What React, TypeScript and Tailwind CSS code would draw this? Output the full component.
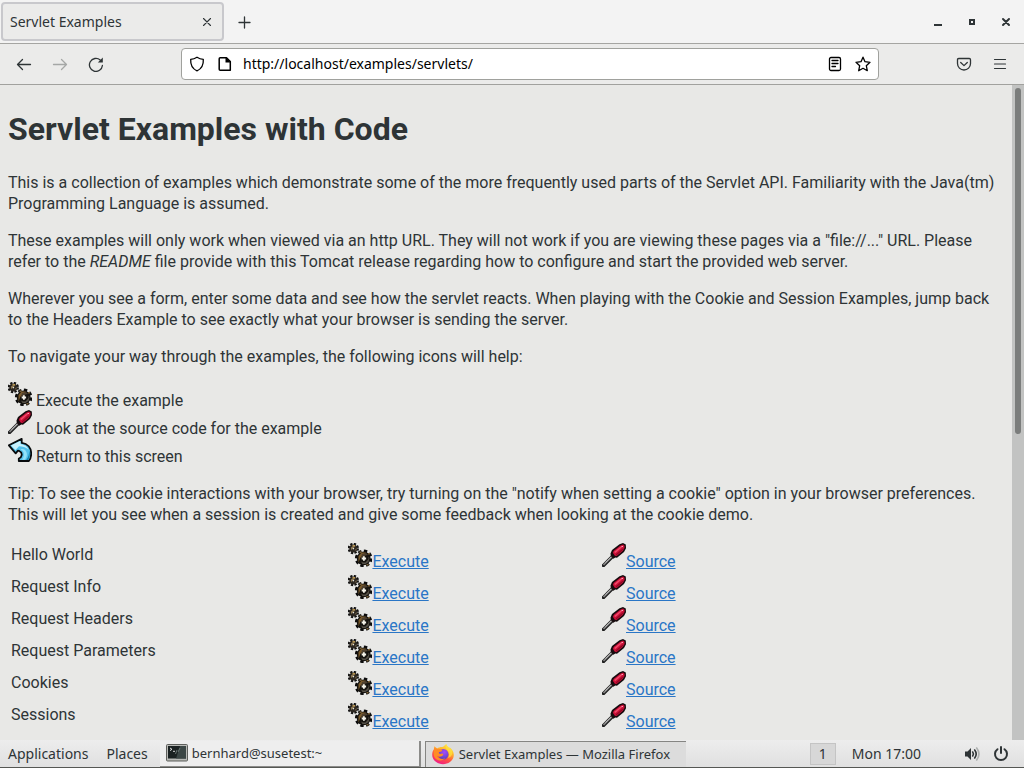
import type { ReactNode } from 'react';

const examples = [
  'Hello World',
  'Request Info',
  'Request Headers',
  'Request Parameters',
  'Cookies',
  'Sessions',
];

function GearsIcon() {
  return (
    <svg viewBox="0 0 24 24" className="inline-block size-6 align-baseline" aria-hidden="true">
      <circle cx="5.3" cy="5.5" r="4.4" fill="none" stroke="#111" strokeWidth="2.6" strokeDasharray="2.1 1.35" />
      <circle cx="5.3" cy="5.5" r="4" fill="#2b2620" />
      <path d="M3 4.500 5 3h2.500L5 5.500 3 7zM6.500 8l2-1.500V5z" fill="#8d7955" />
      <path d="M4.500 2h2.600v1.200H4.500z" fill="#b5924b" />
      <path d="M4.800 5h1.300v1.300H4.800z" fill="#e8e6dc" />
      <circle cx="15.700" cy="15.400" r="7.100" fill="none" stroke="#0c0c0c" strokeWidth="3.400" strokeDasharray="3.200 2.370" />
      <circle cx="15.700" cy="15.400" r="6.900" fill="#15130f" />
      <path d="M10.500 13 13.500 9.500H18l-5.500 5-2 5v-4z" fill="#7a5a2b" />
      <path d="m14 11 4-1 2 2-2.500.5-2 1.500-2.500 1z" fill="#4e4130" />
      <path d="m13 18.500 2 1h2.500l3-3.500v-2.500l1 1.500-1 4-3 2h-3z" fill="#565147" />
      <path d="M11.500 8.500h2v1.500h-2zM20 10h2v1.500h-2zM18.500 21h2v1.500h-2z" fill="#7d6339" />
      <path d="M15 13.300h1.800v1.300h1.300v1.800h-1.300v1.300H15v-1.300h-1.300v-1.800H15z" fill="#f4f2e8" />
    </svg>
  );
}

function ScrewdriverIcon() {
  return (
    <svg viewBox="0 0 24 24" className="inline-block size-6 align-baseline" aria-hidden="true">
      <path d="M1.500 22.500 11 13" stroke="#1c1c1c" strokeWidth="3.400" strokeLinecap="square" />
      <path d="M1.500 22 11 12.500" stroke="#858585" strokeWidth="1.700" />
      <path d="M3.400 19.700 9.500 13.700" stroke="#c9c9c9" strokeWidth=".8" />
      <path d="M8.500 10.500 10 7 17.500 1.300 21 .1 23.800 1.500 24 5.200 22 9 15 14.800l-1.700-.3-2 1.200-2.500-2.600z" fill="#170b0e" />
      <path d="M10.800 9.800 11.800 7.700 18.200 2.700 21 1.600 22.500 2.700 22.500 5 20.700 8 14.700 13 12.800 12.700z" fill="#cc1038" />
      <path d="m12 9 6.600-5.300 1.600.4-6.700 6z" fill="#f04a6a" />
      <path d="m14.200 12.600 5.900-4.900 1.900-3-3 2.200-5 4.300z" fill="#8b0824" />
      <path d="M19.500 2.900h1.400v1h-1.400z" fill="#ffb5c4" />
    </svg>
  );
}

function ReturnIcon() {
  return (
    <svg viewBox="0 0 24 24" className="inline-block size-6 align-baseline" aria-hidden="true">
      <path
        d="M.9 7.300 13.700.9v4c6 .7 9.500 5 9.500 10.800 0 3-.8 5.500-2.300 7.300H10.800v-2.500c3.200-1 4.200-5.700.8-7.300l-1.700-.5-2.200 2.600z"
        fill="#53c2ec"
        stroke="#080b0d"
        strokeWidth="1.800"
        strokeLinejoin="round"
      />
      <path d="M3 7.600 12.500 2.800v3.300c4 .5 6.700 2.500 8 5.500-2.800-2.700-6-3.300-9.500-3.300L7.500 12z" fill="#c7f1fc" />
      <path d="M12.500 11.500c4.300 1.600 4.500 6.500 1.500 10.300h3c2.700-3.700 2.300-7.300.3-9.500-1.300-1.200-3-1.600-4.800-.8z" fill="#91e2fa" />
      <path d="M21 12.500c1.300 3.200 1 6.500-.8 9.500h-2c2.400-2.800 3.100-6 2.800-9.500z" fill="#1683b0" />
    </svg>
  );
}

function TerminalIcon() {
  return (
    <svg viewBox="0 0 22 18" className="h-[18px] w-[22px] shrink-0" aria-hidden="true">
      <rect x=".5" y=".5" width="21" height="16.500" rx="1" fill="#b9bab7" stroke="#5d5f5c" />
      <rect x="2" y="2" width="18" height="12.500" fill="#1b2222" />
      <path d="M10 14.500 14 2h6v12.500z" fill="#3c4746" />
      <path d="m4 4 2 1.300-2 1.300M7 7.300h2" fill="none" stroke="#eee" strokeWidth=".9" />
      <path d="m11 6-1.500 4M14 4l-2 4" stroke="#677371" />
      <path d="M1 16h20v1H1z" fill="#888a85" />
    </svg>
  );
}

function FirefoxIcon() {
  return (
    <svg viewBox="0 0 24 22" className="h-[22px] w-6 shrink-0" aria-hidden="true">
      <defs>
        <linearGradient id="flame" x1=".8" y1="0" x2=".3" y2="1">
          <stop offset="0" stopColor="#fff04f" />
          <stop offset=".35" stopColor="#ffb52c" />
          <stop offset=".65" stopColor="#ff543f" />
          <stop offset="1" stopColor="#ef188c" />
        </linearGradient>
        <radialGradient id="globe" cx=".6" cy=".3" r=".8">
          <stop offset="0" stopColor="#a64bfb" />
          <stop offset="1" stopColor="#4a42b8" />
        </radialGradient>
      </defs>
      <path
        d="M15.200 1c.5 2 1.500 2.800 3.200 4.400l.2-1.200c2.800 2.500 4.400 5 4.200 8-.3 5.200-5.100 9-10.800 9C6 21.200 1.200 17 1.200 11.800c0-2.300.8-4.300 1.700-5.500l.4-3 2.900 2.300c1.300-1 2.700-1.500 4.800-1.500C12.500 4.100 13.500 2 15.200 1z"
        fill="url(#flame)"
      />
      <circle cx="12.300" cy="11.300" r="5.200" fill="url(#globe)" />
      <path d="M3.300 5.500c1.500-.3 3 0 4 .7 1.300-.5 2.800-.2 4 .8l-.9 1.500-2.700.7c0 1 .6 1.600 1.600 1.800l1.800-.4c1 .2 1.400.8 1 1.500-1.400 2-4 2.200-6.100.7 1.500 3.200 5.500 4.100 8.400 2.300-3.500 4-10 2.700-11.500-2.100-.5-2.700 0-5 .4-7.500z" fill="#ff8c25" />
      <path d="M15.200 1c-1 3 0 5 1.500 6.600 2 2 1.900 5.200.3 7.300 3-.8 4.700-3.500 4.300-6.500-.5-3.400-5-3.700-6.100-7.400z" fill="#ffe13d" opacity=".75" />
    </svg>
  );
}

function ChromeIcon({ children, className = 'size-4' }: { children: ReactNode; className?: string }) {
  return (
    <svg
      viewBox="0 0 16 16"
      className={className}
      fill="none"
      stroke="currentColor"
      strokeWidth="1.3"
      strokeLinecap="round"
      strokeLinejoin="round"
      aria-hidden="true"
    >
      {children}
    </svg>
  );
}

function TabStrip() {
  return (
    <header className="flex h-11 shrink-0 items-center border-b border-[#a5a5a2] bg-[#f3f3f3] text-[#2e3436]">
      <div className="ml-px flex h-[39px] w-[223px] items-center justify-between rounded border-2 border-[#c8c8cc] bg-[#ebebea] pr-[7px] pl-[7px]">
        <span className="text-sm">Servlet Examples</span>
        <button aria-label="Close tab" className="flex size-4 items-center justify-center">
          <ChromeIcon><path d="m4.500 4.500 7 7m0-7-7 7" strokeWidth="1.100" /></ChromeIcon>
        </button>
      </div>
      <button aria-label="New tab" className="ml-3 flex size-4 items-center justify-center">
        <ChromeIcon><path d="M8.500 3v11M3 8.500h11" /></ChromeIcon>
      </button>
      <div className="mr-2.5 ml-auto flex items-center gap-[18px]">
        <button aria-label="Minimize" className="size-4">
          <ChromeIcon><path d="M4 10h8v2H4z" fill="currentColor" stroke="none" /></ChromeIcon>
        </button>
        <button aria-label="Maximize" className="size-4">
          <ChromeIcon><path d="M6 6h4v4H6z" strokeWidth="2" strokeLinejoin="miter" /></ChromeIcon>
        </button>
        <button aria-label="Close window" className="size-4">
          <ChromeIcon><path d="m5 5 6 6m0-6-6 6" strokeWidth="2" /></ChromeIcon>
        </button>
      </div>
    </header>
  );
}

function NavBar() {
  return (
    <nav className="flex h-[41px] shrink-0 items-center border-b border-[#a1a19e] bg-[#ebebea] text-[#2e3436]">
      <div className="flex w-[181px] shrink-0 items-center gap-5 pl-4">
        <button aria-label="Back" className="size-4">
          <ChromeIcon><path d="M14.500 8.500h-13m5-5-5 5 5 5" /></ChromeIcon>
        </button>
        <button aria-label="Forward" className="size-4 text-[#a5a7a6]">
          <ChromeIcon><path d="M1.500 8.500h13m-5-5 5 5-5 5" /></ChromeIcon>
        </button>
        <button aria-label="Reload" className="size-4">
          <ChromeIcon>
            <path d="M14.400 9.500A6.500 6.500 0 1 1 12.200 4" />
            <path d="M14.800 1.500v5h-5z" fill="currentColor" stroke="none" />
          </ChromeIcon>
        </button>
      </div>
      <div className="flex h-8 flex-1 items-center rounded border border-[#a0a19d] bg-white px-[7px] text-black">
        <ChromeIcon>
          <path d="M8 1.200c2 1.300 4 2 6.300 2.200.3 5-1.700 9.500-6.300 11.400C3.400 12.900 1.400 8.400 1.700 3.400 4 3.200 6 2.500 8 1.200z" />
        </ChromeIcon>
        <ChromeIcon className="ml-3 size-4">
          <path d="M3.200 1.700h6.300l3.800 3.800v8.800H3.200q-1 0-1-1V2.700q0-1 1-1z" strokeWidth="1.500" />
          <path d="M8.500 1v5.500H14z" fill="currentColor" stroke="none" />
        </ChromeIcon>
        <input
          aria-label="Address"
          defaultValue="http://localhost/examples/servlets/"
          className="ml-2.5 min-w-0 flex-1 bg-transparent text-sm outline-none"
        />
        <button aria-label="Toggle reader view" className="size-4">
          <ChromeIcon>
            <rect x="2.500" y="1.500" width="11" height="13" rx="1.500" />
            <path d="M5 4.500h6M5 7.500h6M5 10.500h3.500" />
          </ChromeIcon>
        </button>
        <button aria-label="Bookmark this page" className="ml-3 size-4">
          <ChromeIcon>
            <path d="m8 1.200 2 4.500 5 .6-3.700 3.400 1 5L8 12.300l-4.300 2.400 1-5L1 6.300l5-.6z" />
          </ChromeIcon>
        </button>
      </div>
      <div className="flex w-[145px] shrink-0 items-center justify-end gap-5 pr-4">
        <button aria-label="Save to Pocket" className="size-4">
          <ChromeIcon>
            <path d="M2.700 2.500h10.600q1.200 0 1.200 1.200v3.800a6.500 6.500 0 0 1-13 0V3.700q0-1.200 1.200-1.200z" />
            <path d="M4.700 6.500 8 9.600l3.300-3.100" />
          </ChromeIcon>
        </button>
        <button aria-label="Open menu" className="size-4">
          <ChromeIcon><path d="M2.500 3.500h11m-11 4.500h11m-11 4.500h11" strokeWidth="1.200" /></ChromeIcon>
        </button>
      </div>
    </nav>
  );
}

function ServletPage() {
  return (
    <main className="min-w-0 flex-1 overflow-hidden px-2 pt-[23px] font-['Roboto',sans-serif] text-base leading-[21px] text-[#2e3436]">
      <h1 className="mb-[22px] text-[32px] leading-[42px] font-bold">Servlet Examples with Code</h1>
      <p className="mb-4">
        This is a collection of examples which demonstrate some of the more frequently used parts of the Servlet API.
        Familiarity with the Java(tm) Programming Language is assumed.
      </p>
      <p className="mb-4">
        These examples will only work when viewed via an http URL. They will not work if you are viewing these pages
        via a "file://..." URL. Please refer to the <em>README</em> file provide with this Tomcat release regarding how
        to configure and start the provided web server.
      </p>
      <p className="mb-4">
        Wherever you see a form, enter some data and see how the servlet reacts. When playing with the Cookie and
        Session Examples, jump back to the Headers Example to see exactly what your browser is sending the server.
      </p>
      <p className="mb-[15px]">To navigate your way through the examples, the following icons will help:</p>
      <ul className="mb-[17px]">
        <li className="h-7"><GearsIcon /> Execute the example</li>
        <li className="h-7"><ScrewdriverIcon /> Look at the source code for the example</li>
        <li className="h-7"><ReturnIcon /> Return to this screen</li>
      </ul>
      <p className="mb-[15px]">
        Tip: To see the cookie interactions with your browser, try turning on the "notify when setting a cookie" option
        in your browser preferences. This will let you see when a session is created and give some feedback when
        looking at the cookie demo.
      </p>
      <table className="w-[85%] table-fixed border-separate border-spacing-0.5">
        <tbody>
          {examples.map((name) => (
            <tr key={name} className="h-[30px] align-top">
              <td className="w-[40%] px-px pt-0.5">{name}</td>
              <td className="w-[30%] p-px">
                <div className="h-7">
                  <a href="#execute" aria-label={name}><GearsIcon /></a>
                  <a href="#execute" className="text-[#2a76c6] underline">Execute</a>
                </div>
              </td>
              <td className="w-[30%] p-px">
                <div className="h-7">
                  <a href="#source" aria-label={name}><ScrewdriverIcon /></a>
                  <a href="#source" className="text-[#2a76c6] underline">Source</a>
                </div>
              </td>
            </tr>
          ))}
        </tbody>
      </table>
    </main>
  );
}

function Taskbar() {
  return (
    <footer className="flex h-7 shrink-0 items-center border-b border-[#555753] bg-linear-to-b from-[#ededed] to-[#e0e0e0] text-sm text-[#2e3436]">
      <button className="ml-2">Applications</button>
      <button className="ml-[18px]">Places</button>
      <button className="ml-3 flex h-[26px] w-[261px] items-center gap-1 border-r-2 border-b border-[#8b8b89] bg-[#eeeeee] pl-1.5 text-[13px]">
        <TerminalIcon />
        bernhard@susetest:~
      </button>
      <button className="ml-1 flex h-[26px] w-[261px] items-center gap-1 border-t border-l border-[#858583] bg-[#dcdcdc] pl-[5px] text-[13px]">
        <FirefoxIcon />
        Servlet Examples — Mozilla Firefox
      </button>
      <button className="ml-auto h-[22px] w-[26px] border border-[#c4c4c4] bg-[#d7d7d7] leading-5">1</button>
      <time className="ml-4">Mon 17:00</time>
      <button aria-label="Volume" className="ml-[43px] size-4">
        <ChromeIcon>
          <path d="M1 5.500h2.500L7 2v12l-3.500-3.500H1z" fill="currentColor" stroke="none" />
          <path d="M8.700 6q1.500 2 0 4M10.700 4q3 4 0 8" strokeWidth="1.600" />
          <path d="M12.700 2q4.500 6 0 12" stroke="#adb0af" strokeWidth="1.600" />
        </ChromeIcon>
      </button>
      <button aria-label="Power" className="mr-[15px] ml-[13px] size-4">
        <ChromeIcon>
          <path d="M8 1v6" strokeWidth="2" />
          <path d="M4.500 3.200a6 6 0 1 0 7 0" strokeWidth="2" />
        </ChromeIcon>
      </button>
    </footer>
  );
}

export default function App() {
  return (
    <div className="flex h-screen flex-col overflow-hidden bg-[#e8e8e6] font-['Noto_Sans',sans-serif]">
      <TabStrip />
      <NavBar />
      <div className="flex min-h-0 flex-1">
        <ServletPage />
        <div className="w-3 shrink-0 bg-[#c2c3c2] px-[3px] pt-[3px]">
          <div className="h-[53%] rounded-full bg-[#7b7d7c]" />
        </div>
      </div>
      <Taskbar />
    </div>
  );
}
